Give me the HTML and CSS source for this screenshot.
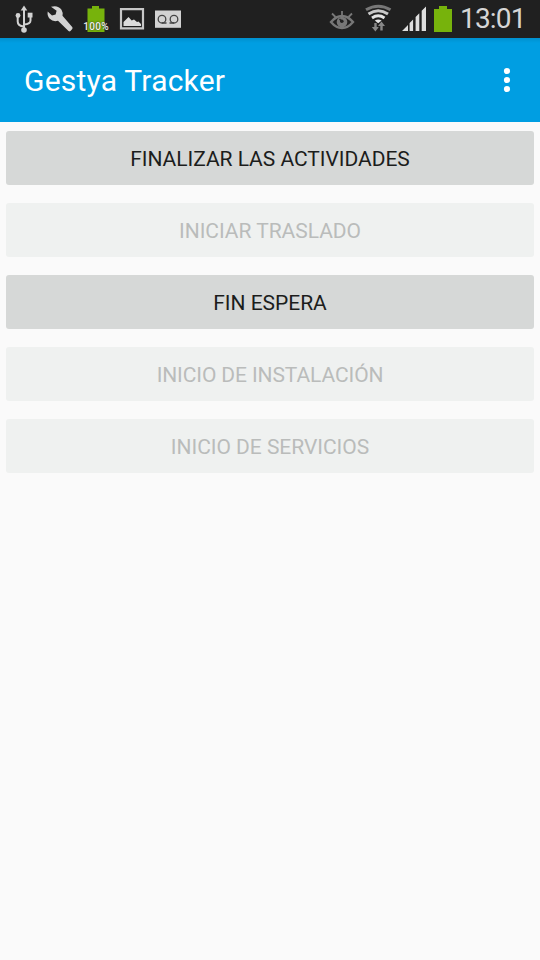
FILE: index.html
```
<!DOCTYPE html>
<html lang="es">
<head>
<meta charset="utf-8">
<title>Gestya Tracker</title>
<link rel="stylesheet" href="styles.css">
</head>
<body>
<header class="status">
  <div class="icons">
    <svg class="icon" viewBox="0 0 36 38" fill="none" stroke="#d2d2d2" stroke-width="2"><path d="M18 10v20M18 26.500q-6.300-.5-6.300-5v-5M18 24.500q6.500-.5 6.500-4v-4"/><path d="M18 5.500l-3.300 5h6.600z" fill="#d2d2d2" stroke="none"/><circle cx="18" cy="30" r="2.800" fill="#d2d2d2" stroke="none"/><circle cx="12" cy="15.500" r="2.400" fill="#d2d2d2" stroke="none"/><path d="M21.700 12.700h4.800v4.800h-4.800z" fill="#d2d2d2" stroke="none"/></svg>
    <svg class="icon" viewBox="0 0 36 38"><path fill="#d2d2d2" d="M9 6.800q7-2 10.500 3 1.600 2.600 1 6L30.200 27q.8 1 0 2l-1.700 2q-1 .8-2 0L16 20.800q-5 1.300-8.300-2Q5 16 5.700 11.500L10 15.500l3.600-1 1-3.700z"/></svg>
    <span class="charge">
      <svg class="icon" viewBox="0 0 36 38"><path fill="#77b30c" d="M14 6h7v2.500h5.500V32h-17V8.500H14z"/></svg>
      <span class="percent">100%</span>
    </span>
    <svg class="icon" viewBox="0 0 36 38"><path d="M7 9.200h22v19.200H7z" fill="none" stroke="#c8c8c8" stroke-width="2.200"/><path fill="#dcdcdc" d="M9.500 26v-4l5-5 3.200 3.500 2.300-1 3 2.500 1.500-.5 2.500 2.500v2z"/></svg>
    <svg class="icon" viewBox="0 0 36 38"><path fill="#d2d2d2" d="M5 10.500h26v17.300H5z"/><g fill="none" stroke="#444" stroke-width="1.300"><circle cx="12" cy="19.200" r="3.800"/><circle cx="24" cy="19.200" r="3.800"/><path d="M12 23h4.500M19.500 23H24"/></g></svg>
  </div>
  <div class="icons">
    <svg class="icon" viewBox="0 0 36 38" fill="none" stroke="#777" stroke-width="2.400"><path d="M7 22q5-6 11-6t11 6q-5 6-11 6T7 22z"/><circle cx="18" cy="22" r="5.300" fill="#777" stroke="none"/><path d="M18 11v5M8 13.500l3.500 3.500M28 13.500L24.500 17" stroke-width="1.800"/><circle cx="17.800" cy="21.300" r="1.800" fill="#222" stroke="none"/><path d="M15.500 19l2 2" stroke="#222" stroke-width="1.500"/></svg>
    <svg class="icon" viewBox="0 0 36 38" fill="none"><path d="M6 9.800q12.300-7.300 24.500 0" stroke="#777" stroke-width="3"/><path d="M8.500 14q9.700-6.500 19.500 0" stroke="#c8c8c8" stroke-width="3"/><path d="M12 18q6.200-4.400 12.500 0" stroke="#e4e4e4" stroke-width="2.900"/><path d="M14.800 20.500q3.400-2 6.800 0l-3.400 2.700z" fill="#e4e4e4"/><path d="M15.500 23v6M21.500 30.500V24" stroke="#888" stroke-width="2.400"/><path d="M11.800 27h7l-3.400 4.500zM18 26h7L21.500 21.500z" fill="#888"/></svg>
    <svg class="icon" viewBox="0 0 36 38" fill="#dedede"><path d="M25.700 10.800L30 6.500V31h-4.300zM19.600 17l3.700-3.700V31h-3.700zM13.600 23l3.500-3.500V31h-3.500zM6 31l6-6v6z"/></svg>
    <svg class="battery" viewBox="0 0 22 38"><path fill="#77b30c" d="M7 6h8v3h5v23H2V9h5z"/></svg>
    <span class="clock">13:01</span>
  </div>
</header>
<div class="appbar">
  <h1>Gestya Tracker</h1>
  <svg class="more" viewBox="0 0 8 26" fill="#fff"><circle cx="4" cy="4" r="3.100"/><circle cx="4" cy="13" r="3.100"/><circle cx="4" cy="22" r="3.100"/></svg>
</div>
<main>
  <button>FINALIZAR LAS ACTIVIDADES</button>
  <button disabled>INICIAR TRASLADO</button>
  <button>FIN ESPERA</button>
  <button class="install" disabled>INICIO DE INSTALACIÓN</button>
  <button disabled>INICIO DE SERVICIOS</button>
</main>
</body>
</html>
```
FILE: styles.css
```
* { box-sizing: border-box; }
body { margin: 0; min-height: 960px; background: #fafafa; font-family: Roboto, sans-serif; }
.status { height: 38px; padding: 0 16px 0 6px; display: flex; justify-content: space-between; background: #202020; }
.icons { display: flex; }
.icon { display: block; width: 36px; height: 38px; }
.charge { position: relative; }
.percent { position: absolute; left: -1px; top: 21px; width: 38px; text-align: center; font-size: 10px; line-height: 12px; font-weight: 500; letter-spacing: 0.3px; color: #eee; text-shadow: 0 0 2px #222; }
.battery { width: 22px; height: 38px; }
.clock { width: 64px; margin-left: 6px; font-size: 28px; line-height: 38px; color: #d6d6d6; white-space: nowrap; letter-spacing: -0.8px; }
.appbar { height: 84px; padding: 0 29px 0 24px; display: flex; align-items: center; justify-content: space-between; color: #fff; background: linear-gradient(#0090ce, #009ee2 5px); }
h1 { margin: 0; padding-top: 2px; font-size: 30px; font-weight: 400; line-height: 36px; letter-spacing: 0.22px; }
.more { width: 8px; height: 26px; }
main { padding: 9px 6px; display: grid; gap: 18px; }
button { height: 54px; padding: 1px 0 0; border: 0; border-radius: 3px; background: #d6d8d7; color: #1c1d1c; font: 400 21px/24px Roboto, sans-serif; letter-spacing: -0.03px; }
button:disabled { background: #eff1f0; color: #babcbb; }
.install { letter-spacing: -0.1px; }
```
